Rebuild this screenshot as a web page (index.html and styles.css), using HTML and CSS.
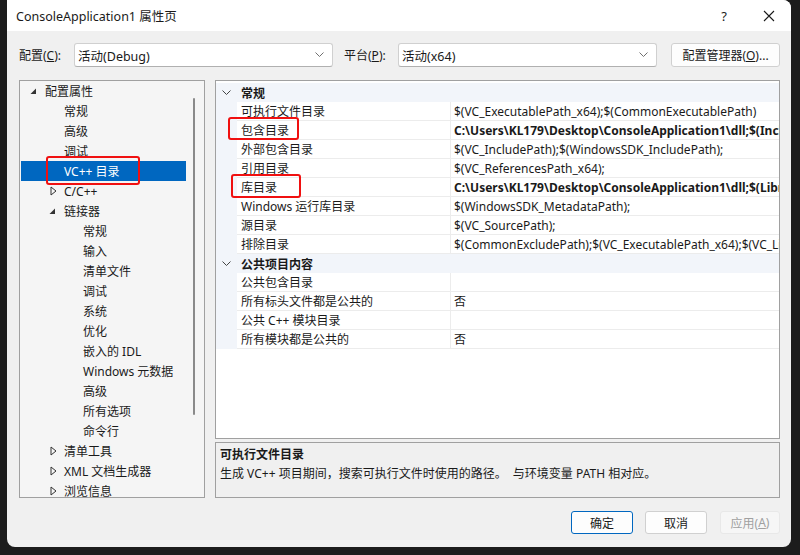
FILE: index.html
```html
<!DOCTYPE html>
<html lang="zh-CN">
<head>
<meta charset="utf-8">
<link rel="stylesheet" href="styles.css">
</head>
<body>
<div class="window">
  <div class="titlebar">
    <span class="title">ConsoleApplication1 属性页</span>
    <span class="help">?</span>
    <svg class="close" width="12" height="12" viewBox="0 0 12 12"><path d="M1 1 L11 11 M11 1 L1 11" stroke="#1a1a1a" stroke-width="1.1" fill="none"/></svg>
  </div>
  <div class="content">
    <div class="toprow">
      <span class="lbl lbl1">配置(<u>C</u>):</span>
      <div class="combo"><span>活动(Debug)</span><svg width="9" height="6" viewBox="0 0 9 6"><path d="M0.5 0.5 L4.5 4.5 L8.5 0.5" stroke="#707070" fill="none"/></svg></div>
      <span class="lbl lbl2">平台(<u>P</u>):</span>
      <div class="combo"><span>活动(x64)</span><svg width="9" height="6" viewBox="0 0 9 6"><path d="M0.5 0.5 L4.5 4.5 L8.5 0.5" stroke="#707070" fill="none"/></svg></div>
      <div class="btn cfgbtn">配置管理器(<u>O</u>)...</div>
    </div>
    <div class="main">
      <div class="tree">
        <div class="rows">
          <div class="row l0"><svg class="exp" width="7" height="7" viewBox="0 0 7 7"><path d="M6 0.5 L6 6 L0.5 6 Z" fill="#333"/></svg>配置属性</div>
          <div class="row l1">常规</div>
          <div class="row l1">高级</div>
          <div class="row l1">调试</div>
          <div class="row l1 sel">VC++ 目录</div>
          <div class="row l1"><svg class="col" width="7" height="10" viewBox="0 0 7 10"><path d="M1 1 L6 5 L1 9 Z" stroke="#333" fill="none"/></svg>C/C++</div>
          <div class="row l1"><svg class="exp" width="7" height="7" viewBox="0 0 7 7"><path d="M6 0.5 L6 6 L0.5 6 Z" fill="#333"/></svg>链接器</div>
          <div class="row l2">常规</div>
          <div class="row l2">输入</div>
          <div class="row l2">清单文件</div>
          <div class="row l2">调试</div>
          <div class="row l2">系统</div>
          <div class="row l2">优化</div>
          <div class="row l2">嵌入的 IDL</div>
          <div class="row l2">Windows 元数据</div>
          <div class="row l2">高级</div>
          <div class="row l2">所有选项</div>
          <div class="row l2">命令行</div>
          <div class="row l1"><svg class="col" width="7" height="10" viewBox="0 0 7 10"><path d="M1 1 L6 5 L1 9 Z" stroke="#333" fill="none"/></svg>清单工具</div>
          <div class="row l1"><svg class="col" width="7" height="10" viewBox="0 0 7 10"><path d="M1 1 L6 5 L1 9 Z" stroke="#333" fill="none"/></svg>XML 文档生成器</div>
          <div class="row l1"><svg class="col" width="7" height="10" viewBox="0 0 7 10"><path d="M1 1 L6 5 L1 9 Z" stroke="#333" fill="none"/></svg>浏览信息</div>
        </div>
        <div class="scroll"><div class="thumb"></div></div>
        <div class="mark mark-tree"></div>
      </div>
      <div class="right">
        <div class="grid">
          <div class="cat"><span class="gut"><svg width="9" height="6" viewBox="0 0 9 6"><path d="M0.5 0.5 L4.5 4.5 L8.5 0.5" stroke="#444" fill="none"/></svg></span><span class="catname">常规</span></div>
          <div class="prop"><span class="gut"></span><span class="name">可执行文件目录</span><span class="val">$(VC_ExecutablePath_x64);$(CommonExecutablePath)</span></div>
          <div class="prop"><span class="gut"></span><span class="name">包含目录</span><span class="val b">C:\Users\KL179\Desktop\ConsoleApplication1\dll;$(IncludePath)</span></div>
          <div class="prop"><span class="gut"></span><span class="name">外部包含目录</span><span class="val">$(VC_IncludePath);$(WindowsSDK_IncludePath);</span></div>
          <div class="prop"><span class="gut"></span><span class="name">引用目录</span><span class="val">$(VC_ReferencesPath_x64);</span></div>
          <div class="prop"><span class="gut"></span><span class="name">库目录</span><span class="val b">C:\Users\KL179\Desktop\ConsoleApplication1\dll;$(LibraryPath)</span></div>
          <div class="prop"><span class="gut"></span><span class="name">Windows 运行库目录</span><span class="val">$(WindowsSDK_MetadataPath);</span></div>
          <div class="prop"><span class="gut"></span><span class="name">源目录</span><span class="val">$(VC_SourcePath);</span></div>
          <div class="prop"><span class="gut"></span><span class="name">排除目录</span><span class="val">$(CommonExcludePath);$(VC_ExecutablePath_x64);$(VC_LibraryPath_x64)</span></div>
          <div class="cat"><span class="gut"><svg width="9" height="6" viewBox="0 0 9 6"><path d="M0.5 0.5 L4.5 4.5 L8.5 0.5" stroke="#444" fill="none"/></svg></span><span class="catname">公共项目内容</span></div>
          <div class="prop"><span class="gut"></span><span class="name">公共包含目录</span><span class="val"></span></div>
          <div class="prop"><span class="gut"></span><span class="name">所有标头文件都是公共的</span><span class="val">否</span></div>
          <div class="prop"><span class="gut"></span><span class="name">公共 C++ 模块目录</span><span class="val"></span></div>
          <div class="prop"><span class="gut"></span><span class="name">所有模块都是公共的</span><span class="val">否</span></div>
          <div class="mark mark-inc"></div>
          <div class="mark mark-lib"></div>
        </div>
        <div class="desc">
          <div class="dtitle">可执行文件目录</div>
          <div class="dtext">生成 VC++ 项目期间，搜索可执行文件时使用的路径。&nbsp;&nbsp;与环境变量 PATH 相对应。</div>
        </div>
      </div>
    </div>
    <div class="buttons">
      <div class="btn ok">确定</div>
      <div class="btn">取消</div>
      <div class="btn dis">应用(<u>A</u>)</div>
    </div>
  </div>
</div>
</body>
</html>
```
FILE: styles.css
```css
* { box-sizing: border-box; }
html, body { margin: 0; padding: 0; }
body {
  background: #1c1c1c;
  width: 800px;
  height: 555px;
  overflow: hidden;
  font-family: "Noto Sans", "Noto Sans CJK SC", sans-serif;
  font-size: 12px;
  color: #1a1a1a;
}
.window {
  margin-left: 7px;
  width: 784px;
  height: 547px;
  background: #f0f0f0;
  border-radius: 0 8px 8px 8px;
  overflow: hidden;
}
.titlebar {
  height: 31px;
  background: #ffffff;
  display: flex;
  align-items: center;
  padding-left: 9px;
}
.title { font-size: 12.5px; flex: 1; }
.help { font-size: 13px; margin-right: 36px; }
.close { margin-right: 16px; }
.content { padding: 12px 11px 0 12px; }
.toprow { display: flex; align-items: center; height: 24px; }
.lbl { white-space: nowrap; }
.lbl1 { width: 55px; }
.lbl2 { width: 54px; margin-left: 11px; }
.combo {
  width: 259px;
  height: 24px;
  background: #fff;
  border: 1px solid #d0d0d0;
  border-bottom-color: #b0b0b0;
  border-radius: 3px;
  display: flex;
  align-items: center;
  justify-content: space-between;
  padding: 0 8px 0 3px;
  font-size: 12.5px;
}
.btn {
  height: 23px;
  border: 1px solid #d0d0d0;
  border-radius: 3px;
  background: #fdfdfd;
  display: flex;
  align-items: center;
  justify-content: center;
  white-space: nowrap;
}
.cfgbtn { margin-left: auto; width: 109px; height: 24px; }
.main { display: flex; gap: 10px; margin-top: 13px; height: 418px; }
.tree {
  position: relative;
  flex: none;
  width: 186px;
  border: 1px solid #a0a0a0;
  background: #f5f5f5;
  overflow: hidden;
  padding: 0 1px;
}
.rows { width: 165px; }
.row {
  height: 20px;
  display: flex;
  align-items: center;
  white-space: nowrap;
  position: relative;
}
.l0 { padding-left: 24px; }
.l1 { padding-left: 43px; }
.l2 { padding-left: 62px; }
.row svg { position: absolute; }
.l0 .exp { left: 9px; top: 7px; }
.l1 .exp { left: 28px; top: 7px; }
.l1 .col { left: 29px; top: 5px; }
.sel { background: #0067c0; color: #fff; }
.scroll { position: absolute; right: 0; top: 0; bottom: 0; width: 18px; }
.thumb { position: absolute; left: 7px; top: 17px; width: 2px; height: 317px; background: #8a8a8a; border-radius: 1px; }
.mark { position: absolute; border: 2px solid #f01010; border-radius: 3px; }
.mark-tree { left: 26px; top: 75px; width: 94px; height: 29px; }
.right { flex: 1; min-width: 0; display: flex; flex-direction: column; gap: 3px; }
.grid {
  position: relative;
  height: 359px;
  border: 1px solid #a0a0a0;
  background: #fff;
  padding-top: 2px;
  overflow: hidden;
}
.cat, .prop { display: flex; height: 19px; white-space: nowrap; }
.gut { width: 21px; flex: none; background: #f2f5fa; display: flex; align-items: center; justify-content: center; }
.cat { background: #f2f5fa; }
.catname { font-weight: bold; padding-left: 4px; display: flex; align-items: center; }
.name {
  width: 214px; flex: none; padding-left: 4px;
  border-right: 1px solid #ececec; border-bottom: 1px solid #ececec;
  display: flex; align-items: center;
}
.val {
  flex: 1; min-width: 0; padding-left: 3px; overflow: hidden;
  border-bottom: 1px solid #ececec;
  display: flex; align-items: center;
}
.b { font-weight: bold; }
.mark-inc { left: 12px; top: 36px; width: 71px; height: 23px; }
.mark-lib { left: 15px; top: 93px; width: 70px; height: 24px; }
.desc {
  flex: 1;
  border: 1px solid #a0a0a0;
  background: #f0f0f0;
  padding: 2px 4px;
}
.dtitle { font-weight: bold; height: 19px; line-height: 19px; }
.dtext { height: 19px; line-height: 19px; white-space: nowrap; }
.buttons { display: flex; justify-content: flex-end; gap: 12px; margin-top: 13px; }
.buttons .btn { width: 62px; }
.ok { border: 1px solid #0067c0; }
.dis { width: 60px !important; color: #a0a0a0; background: #f6f6f6; border-color: #e8e8e8; margin-left: 1px; }
```
